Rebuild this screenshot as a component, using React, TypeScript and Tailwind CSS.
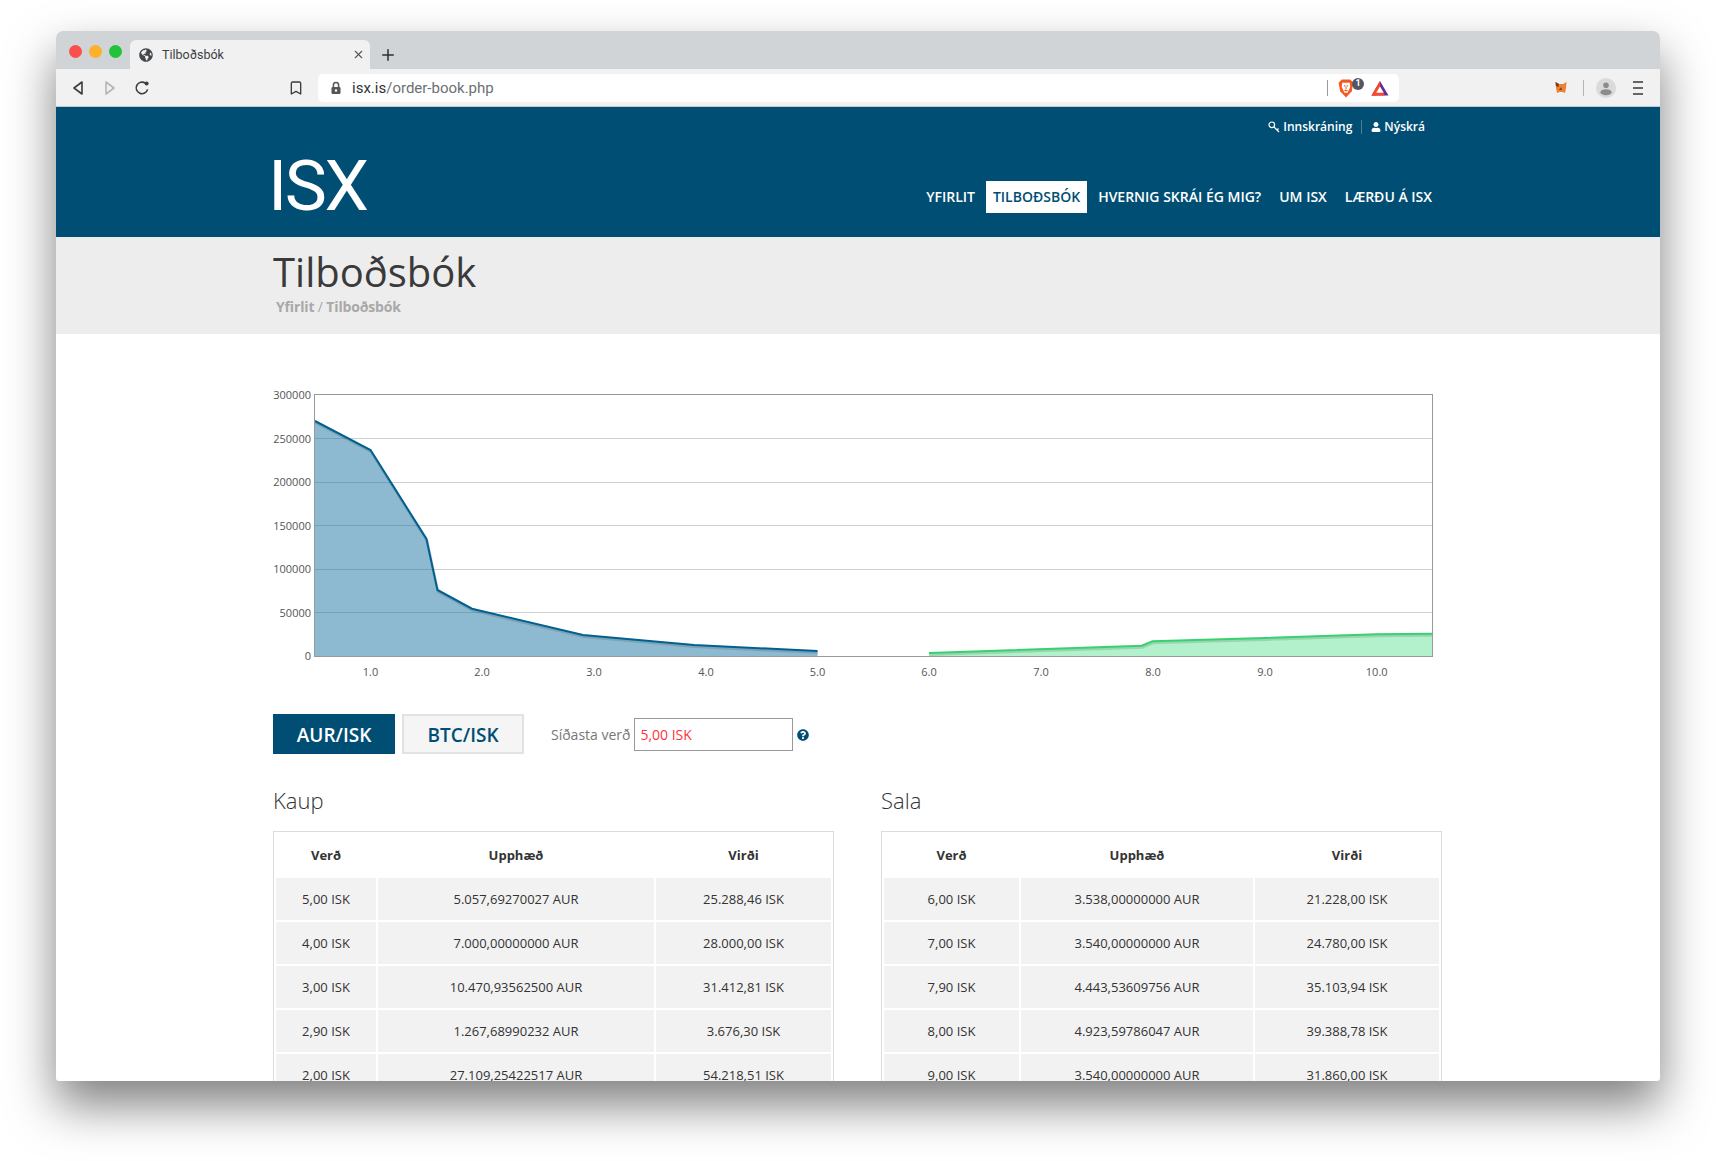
import { Bookmark, Plus, X } from "lucide-react";
import { FaGlobeAmericas, FaQuestionCircle, FaUser } from "react-icons/fa";

const buyRows = [
  ["5,00 ISK", "5.057,69270027 AUR", "25.288,46 ISK"],
  ["4,00 ISK", "7.000,00000000 AUR", "28.000,00 ISK"],
  ["3,00 ISK", "10.470,93562500 AUR", "31.412,81 ISK"],
  ["2,90 ISK", "1.267,68990232 AUR", "3.676,30 ISK"],
  ["2,00 ISK", "27.109,25422517 AUR", "54.218,51 ISK"],
];

const sellRows = [
  ["6,00 ISK", "3.538,00000000 AUR", "21.228,00 ISK"],
  ["7,00 ISK", "3.540,00000000 AUR", "24.780,00 ISK"],
  ["7,90 ISK", "4.443,53609756 AUR", "35.103,94 ISK"],
  ["8,00 ISK", "4.923,59786047 AUR", "39.388,78 ISK"],
  ["9,00 ISK", "3.540,00000000 AUR", "31.860,00 ISK"],
];

const navItems = ["YFIRLIT", "TILBOÐSBÓK", "HVERNIG SKRÁI ÉG MIG?", "UM ISX", "LÆRÐU Á ISX"];

function Toolbar() {
  return (
    <div className="flex h-[38px] shrink-0 items-center border-b border-[#c8c8c8] bg-[#f1f1f1]">
      <svg width="14" height="16" viewBox="0 0 14 16" className="ml-[15px]" fill="none" stroke="#3c3c3c" strokeWidth="1.6" strokeLinejoin="round">
        <path d="M11 2 L3 8 L11 14 Z" />
      </svg>
      <svg width="14" height="16" viewBox="0 0 14 16" className="ml-[18px]" fill="none" stroke="#b5b5b5" strokeWidth="1.6" strokeLinejoin="round">
        <path d="M3 2 L11 8 L3 14 Z" />
      </svg>
      <svg width="16" height="16" viewBox="0 0 16 16" className="ml-[17px]" fill="none" stroke="#3c3c3c" strokeWidth="1.6">
        <path d="M13.6 9.4 A5.8 5.8 0 1 1 11.4 3.2" />
        <circle cx="12.6" cy="3.6" r="2" fill="#3c3c3c" stroke="none" />
      </svg>
      <Bookmark className="ml-[138px] text-[#3c3c3c]" size={16} strokeWidth={2} />
      <div className="ml-[14px] flex h-[28px] w-[1081px] items-center rounded-[5px] bg-white">
        <svg width="12" height="14" viewBox="0 0 12 14" className="ml-[12px]">
          <path d="M3.4 6V4.2a2.6 2.6 0 0 1 5.2 0V6" fill="none" stroke="#555" strokeWidth="1.5" />
          <rect x="1.5" y="6" width="9" height="7" rx="1.2" fill="#555" />
          <circle cx="6" cy="9.5" r="1.2" fill="#fff" />
        </svg>
        <div className="ml-[10px] pt-[2px] font-['Roboto',sans-serif] text-[15px] text-[#6b6f73]">
          <span className="text-[#303336]">isx.is</span>/order-book.php
        </div>
        <div className="ml-auto mr-[10px] flex items-center">
          <div className="h-[16px] w-px bg-[#9a9a9a]" />
          <div className="relative ml-[10px] h-[20px] w-[16px]">
            <svg width="16" height="19" viewBox="0 0 15 18" className="mt-px">
              <path d="M3.5 0.5 H11.5 L14.5 3.5 L13 11.5 L7.5 17.5 L2 11.5 L0.5 3.5 Z" fill="#f25a22" />
              <path d="M4 3.5 H11 L11.5 7.5 L9 13 H6 L3.5 7.5 Z" fill="#fff" />
              <path d="M5.5 6.5 H6.8 M8.2 6.5 H9.5 M7.5 7 V10 M6 11 H9" stroke="#f25a22" strokeWidth="1" fill="none" />
            </svg>
            <span className="absolute left-[14px] top-0 flex h-[12px] w-[12px] items-center justify-center rounded-full bg-[#555566] font-['Roboto',sans-serif] text-[9px] font-bold text-white">
              1
            </span>
          </div>
          <svg width="18" height="16" viewBox="0 0 18 16" className="ml-[17px]">
            <path d="M9 1 L17.5 15.5 H0.5 Z" fill="#662d91" />
            <path d="M9 1 L0.5 15.5 H5 L9 8 Z" fill="#ff4724" />
            <path d="M0.5 15.5 H14 L12 12.5 H5 Z" fill="#ff4724" />
            <path d="M9 6.5 L12.8 12.8 H5.2 Z" fill="#fff" />
          </svg>
        </div>
      </div>
      <svg width="12" height="13" viewBox="0 0 12 13" className="ml-[156px]">
        <path d="M0.5 1 L4 3 H8 L11.5 1 L11 7 L10 12 L7.5 11 H4.5 L2 12 L1 7 Z" fill="#ee8133" />
        <path d="M0.5 1 L4 3 L3.5 6 L1 5 Z M6 6 L4 9 L7 9 Z" fill="#763e1a" />
      </svg>
      <div className="ml-[16px] h-[16px] w-px bg-[#b5b5b5]" />
      <div className="relative ml-[12px] h-[20px] w-[20px] overflow-hidden rounded-full bg-[#dadada]">
        <svg width="20" height="20" viewBox="0 0 20 20">
          <circle cx="10" cy="7.2" r="2.8" fill="#8c8c8c" />
          <ellipse cx="10" cy="14.2" rx="5.6" ry="3" fill="#8c8c8c" />
        </svg>
      </div>
      <div className="ml-[17px] flex w-[10px] flex-col gap-[4px]">
        <div className="h-[2px] bg-[#666]" />
        <div className="h-[2px] bg-[#666]" />
        <div className="h-[2px] bg-[#666]" />
      </div>
    </div>
  );
}

function Chart() {
  const gridYs = [438.5, 482.5, 525.5, 569.5, 612.5];
  const yLabels = [
    ["300000", 395],
    ["250000", 439],
    ["200000", 482],
    ["150000", 526],
    ["100000", 569],
    ["50000", 613],
    ["0", 656],
  ] as const;
  const xLabels = [
    ["1.0", 370.5], ["2.0", 482], ["3.0", 594], ["4.0", 706], ["5.0", 817.5],
    ["6.0", 929], ["7.0", 1041], ["8.0", 1153], ["9.0", 1265], ["10.0", 1376.7],
  ] as const;
  const blue = "315,421 370.5,450 426.5,539 437.5,590 472,608.7 583,635 694,645 817.5,651";
  const green = "929,653 1141.8,645.7 1152.5,641.3 1265,638 1376.7,634.3 1432,633.7";

  return (
    <svg width="1170" height="306" viewBox="273 384 1170 306" className="block font-['Open_Sans',sans-serif]">
      {gridYs.map((y) => (
        <line key={y} x1="315" x2="1432" y1={y} y2={y} stroke="#cfcfcf" strokeWidth="1" />
      ))}
      <polygon points={`${blue} 817.5,656 315,656`} fill="#1b75a3" fillOpacity="0.5" />
      <polygon points={`${green} 1432,656 929,656`} fill="#3fdc7c" fillOpacity="0.4" />
      <polyline points={blue} fill="none" stroke="#000" strokeOpacity="0.12" strokeWidth="3" transform="translate(0.5 1.5)" />
      <polyline points={green} fill="none" stroke="#000" strokeOpacity="0.12" strokeWidth="3" transform="translate(0.5 1.5)" />
      <polyline points={blue} fill="none" stroke="#00608f" strokeWidth="2" />
      <polyline points={green} fill="none" stroke="#35d36f" strokeWidth="2" />
      <rect x="314.5" y="394.5" width="1118" height="262" fill="none" stroke="#999" strokeWidth="1" />
      {yLabels.map(([t, y]) => (
        <text key={t} x="311" y={y + 4} textAnchor="end" fontSize="11" fill="#555">{t}</text>
      ))}
      {xLabels.map(([t, x]) => (
        <text key={t} x={x} y="676" textAnchor="middle" fontSize="11" fill="#555">{t}</text>
      ))}
    </svg>
  );
}

function OrderTable({ title, rows, cols }: { title: string; rows: string[][]; cols: number[] }) {
  return (
    <div className="w-[561px]">
      <h3 className="h-[45px] font-['Open_Sans',sans-serif] text-[22px] font-light leading-[28px] text-[#333]">{title}</h3>
      <table className="w-[561px] table-fixed border-separate border-spacing-[2px] border border-[#dcdcdc] bg-white text-center font-['Open_Sans',sans-serif] text-[13px] text-[#333]">
        <colgroup>
          {cols.map((c) => (
            <col key={c} style={{ width: c }} />
          ))}
        </colgroup>
        <thead>
          <tr>
            <th className="h-[42px] p-0 pt-[2px] font-bold">Verð</th>
            <th className="h-[42px] p-0 pt-[2px] font-bold">Upphæð</th>
            <th className="h-[42px] p-0 pt-[2px] font-bold">Virði</th>
          </tr>
        </thead>
        <tbody>
          {rows.map((row) => (
            <tr key={row[0]}>
              {row.map((cell) => (
                <td key={cell} className="h-[42px] bg-[#f2f2f2] p-0 pt-[2px]">{cell}</td>
              ))}
            </tr>
          ))}
        </tbody>
      </table>
    </div>
  );
}

export default function App() {
  return (
    <div className="h-[1161px] overflow-hidden bg-white pl-[56px] pt-[31px]">
      <div className="flex h-[1050px] w-[1604px] flex-col overflow-hidden rounded-t-[7px] rounded-b-[3px] bg-white shadow-[0_24px_48px_rgba(0,0,0,0.5)]">
        {/* tab strip */}
        <div className="flex h-[38px] shrink-0 bg-[#d0d4d7]">
          <div className="ml-[12.5px] mt-[13.5px] h-[13px] w-[13px] rounded-full bg-[#fc4f4b]" />
          <div className="ml-[7px] mt-[13.5px] h-[13px] w-[13px] rounded-full bg-[#fdb12b]" />
          <div className="ml-[7px] mt-[13.5px] h-[13px] w-[13px] rounded-full bg-[#22c33a]" />
          <div className="ml-[8.5px] mt-[9px] flex w-[240px] items-center rounded-t-[6px] bg-[#f1f1f1] font-['Roboto',sans-serif] text-[12.5px] text-[#3c3f42]">
            <FaGlobeAmericas className="ml-[9px] text-[#45484b]" size={14} />
            <span className="ml-[9px] pt-[2px]">Tilboðsbók</span>
            <X className="ml-auto mr-[5px] text-[#55585b]" size={13} strokeWidth={2} />
          </div>
          <Plus className="ml-[9px] mt-[15px] text-[#2c2f32]" size={18} strokeWidth={2} />
        </div>
        <Toolbar />

        {/* site header */}
        <header className="h-[130px] shrink-0 bg-[#004e74]">
          <div className="mx-auto flex h-full w-[1170px] justify-between">
            <div className="-ml-[5px] mt-[34px] font-['Roboto',sans-serif] text-[71px] font-normal leading-[90px] tracking-[-2.5px] text-white">ISX</div>
            <div className="flex flex-col items-end font-['Open_Sans',sans-serif] text-white">
              <div className="mr-[18px] mt-[11px] flex h-[18px] items-center text-[12px] font-semibold">
                <svg width="12" height="12" viewBox="0 0 12 12" fill="none" stroke="#fff" strokeWidth="1.2">
                  <circle cx="3.8" cy="3.8" r="2.8" />
                  <path d="M6 6 L11 11 M9 9 L10.5 7.5" />
                </svg>
                <span className="ml-[3px]">Innskráning</span>
                <div className="mx-[9px] h-[14px] w-px bg-[#4f7e96]" />
                <FaUser size={10} />
                <span className="ml-[3px]">Nýskrá</span>
              </div>
              <nav className="mr-[4px] mt-[45px] flex gap-[4px] text-[14px] font-semibold">
                {navItems.map((item) => (
                  <a
                    key={item}
                    className={
                      item === "TILBOÐSBÓK"
                        ? "flex h-[32px] items-center bg-white px-[7px] pb-[2px] text-[#004e74]"
                        : "flex h-[32px] items-center px-[7px] pb-[2px] text-white"
                    }
                  >
                    {item}
                  </a>
                ))}
              </nav>
            </div>
          </div>
        </header>

        {/* page title */}
        <div className="h-[97px] shrink-0 bg-[#ededed]">
          <div className="mx-auto w-[1170px] font-['Open_Sans',sans-serif]">
            <h1 className="pt-[9px] text-[40px] leading-[51px] text-[#3a3a3a]">Tilboðsbók</h1>
            <div className="ml-[3px] text-[14px] font-bold leading-[20px] tracking-[-0.15px] text-[#a8a8a8]">
              Yfirlit <span className="font-normal">/</span> Tilboðsbók
            </div>
          </div>
        </div>

        {/* content */}
        <main className="mx-auto w-[1170px] pt-[50px]">
          <Chart />
          <div className="mt-[24px] flex items-center font-['Open_Sans',sans-serif]">
            <button className="h-[40px] w-[122px] bg-[#004e74] pt-[2px] text-[19px] font-semibold text-white">AUR/ISK</button>
            <button className="ml-[7px] h-[40px] w-[122px] border-2 border-[#e2e2e2] bg-[#f5f5f5] pt-[2px] text-[19px] font-semibold text-[#004e74]">BTC/ISK</button>
            <span className="ml-[27px] text-[14px] text-[#777]">Síðasta verð</span>
            <div className="ml-[4px] flex h-[33px] w-[159px] items-center border border-[#999] bg-white pl-[5px] text-[14px] text-[#ff3340]">5,00 ISK</div>
            <FaQuestionCircle className="ml-[4px] mt-px text-[#004e74]" size={12} />
          </div>
          <div className="mt-[32px] flex w-[1169px] justify-between">
            <OrderTable title="Kaup" rows={buyRows} cols={[100, 276, 175]} />
            <OrderTable title="Sala" rows={sellRows} cols={[135, 232, 184]} />
          </div>
        </main>
      </div>
    </div>
  );
}
